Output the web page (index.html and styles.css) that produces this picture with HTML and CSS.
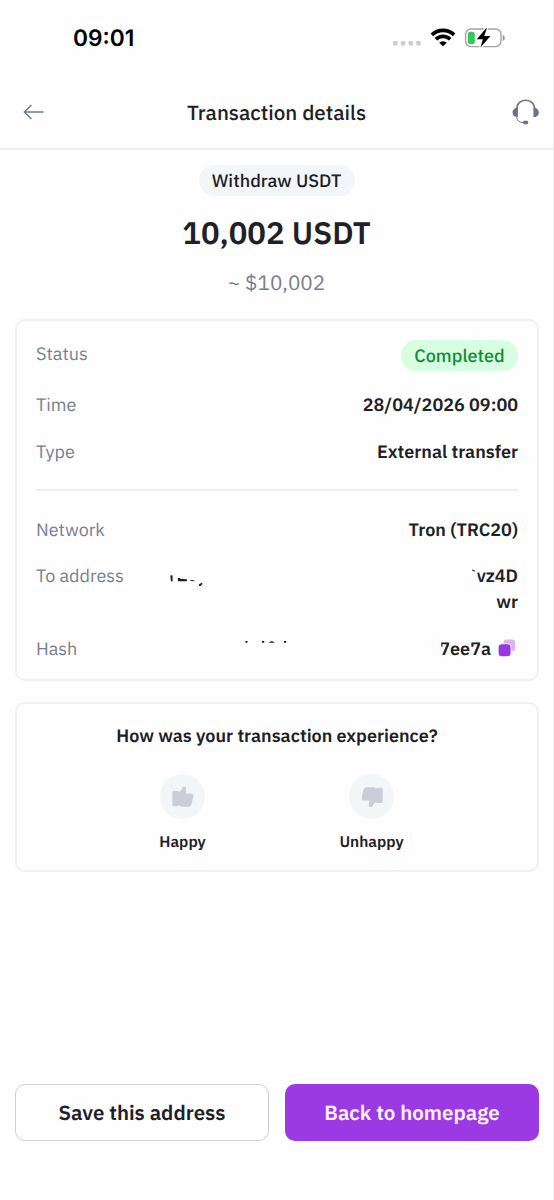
FILE: index.html
```html
<!DOCTYPE html>
<html lang="en">
<head>
<meta charset="utf-8">
<title>Transaction details</title>
<link rel="stylesheet" href="styles.css">
</head>
<body>
<div class="screen">
  <div class="statusbar">
    <span class="clock">09:01</span>
    <div class="indicators">
      <svg class="signal" width="28" height="5" viewBox="0 0 28 5" fill="#cdcdcd"><rect width="4.5" height="4.5" rx="1.3"/><rect x="7.8" width="4.5" height="4.5" rx="1.3"/><rect x="15.5" width="4.5" height="4.5" rx="1.3"/><rect x="23.2" width="4.5" height="4.5" rx="1.3"/></svg>
      <svg class="wifi" width="26" height="19" viewBox="0 0 26 19" fill="none" stroke="#000" stroke-width="3.7"><path d="M1.9 6.9a16 16 0 0 1 22.2 0"/><path d="M5.9 11.3a10 10 0 0 1 14.2 0"/><path d="M9.2 14.7a5.4 5.4 0 0 1 7.6 0L13 18.3z" fill="#000" stroke="none"/></svg>
      <svg class="battery" width="42" height="22" viewBox="0 0 42 22"><rect x="1.6" y="2" width="35.4" height="17.6" rx="5.5" fill="#fff" stroke="#a3a3a3" stroke-width="1.4"/><path d="M38.8 8v6c2.6-.8 2.6-5.2 0-6z" fill="#8f8f8f"/><rect x="3.8" y="4.8" width="7" height="12.2" rx="2.6" fill="#35c759"/><path d="M22 1.2 12.8 12.2h6.1l-2.5 8.4 10.1-11.500h-6.200L22.900 1.200z" fill="#000" stroke="#fff" stroke-width="2.400" paint-order="stroke" stroke-linejoin="round"/></svg>
    </div>
  </div>

  <header class="header">
    <svg class="back" width="22" height="16" viewBox="0 0 22 16" fill="none" stroke="#717989" stroke-width="1.5"><path d="M20.5 8H1.5M8.4 1 1.4 8l7 7"/></svg>
    <h1 class="title">Transaction details</h1>
    <svg class="support" width="28" height="26" viewBox="0 0 28 26"><path d="M4.8 10.500C4.700 4.500 8.400 1.200 13.700 1.200s9 3.300 8.900 9.300" fill="none" stroke="#697284" stroke-width="1.500"/><path d="M5.900 8.800v9.400C2.700 18.200.6 16.500.6 13.500s2.100-4.700 5.300-4.700zM21.400 8.800v9.400c3.300 0 5.400-1.700 5.400-4.700s-2.100-4.700-5.400-4.700z" fill="#697284"/><path d="M4.600 18.300c.7 3.500 3 5.100 6.500 5.300" fill="none" stroke="#697284" stroke-width="1"/><rect x="11" y="21.800" width="5.200" height="3.400" rx="1.400" fill="#697284"/></svg>
  </header>

  <main class="content">
    <section class="summary">
      <span class="kind">Withdraw USDT</span>
      <div class="amount">10,002 USDT</div>
      <div class="fiat">~ $10,002</div>
    </section>

    <section class="card details">
      <div class="row"><span class="label">Status</span><span class="badge">Completed</span></div>
      <div class="row"><span class="label">Time</span><span class="value">28/04/2026 09:00</span></div>
      <div class="row"><span class="label">Type</span><span class="value">External transfer</span></div>
      <hr class="rule">
      <div class="row"><span class="label">Network</span><span class="value">Tron (TRC20)</span></div>
      <div class="row">
        <span class="label">To address</span>
        <svg class="address-marks" width="36" height="12" viewBox="0 0 36 12" fill="#202126"><path d="M.3 .5 2.600.2v6H.9zM7.900 3h2.100v.7l6.900.5v2H7.900zM20 5.300l2.600-.2 2 .7v.5l-4-.3zM29 9.200l3.300-1.800v1.600l-1.500 1.900H29z"/></svg>
        <span class="value"><svg class="tail-mark" width="5" height="4" viewBox="0 0 5 4"><path d="M1 1 4 2.200" stroke="#202126" stroke-width="1"/></svg><span class="address-tail">vz4D</span><br>wr</span>
      </div>
      <div class="row">
        <span class="label">Hash</span>
        <svg class="hash-marks" width="44" height="4" viewBox="0 0 44 4" fill="#202126"><path d="M.5 1h2.200l-.5 1.700H.5zM17 1h2.200v1.700H17zM24 2.200l2-.9h1.400l2 .9v.6H24zM39 1h2.200v1.700H39z"/></svg>
        <span class="value hash-tail">7ee7a</span>
        <svg class="copy" width="18" height="18" viewBox="0 0 18 18"><rect x="5.500" y=".6" width="11.700" height="11.700" rx="3.300" fill="#dab4f2"/><rect x=".6" y="5.300" width="12" height="12" rx="3.300" fill="#9838e3" stroke="#fff" stroke-width="1.600" paint-order="stroke"/></svg>
      </div>
    </section>

    <section class="card feedback">
      <h2 class="question">How was your transaction experience?</h2>
      <div class="choices">
        <div class="choice">
          <span class="circle"><svg width="22" height="22" viewBox="0 0 22 22" fill="#ccced7"><path d="M1.800 5h3.400c.8 0 1.300.5 1.500 1.100C9.300 5.100 9.800 3 10.600 1.600 11.400.2 14 .7 14.200 2.800l-.5 4.600h5.500c1.500 0 2.500 1.300 2.200 2.700l-1.900 8.200c-.4 1.500-1.300 2.400-2.800 2.400H11c-1.900 0-3.100-.5-4.200-1.400-.3.6-.9.9-1.600.9H1.800C.9 20.200.3 19.600.3 18.700V6.500C.3 5.600.9 5 1.800 5z"/></svg></span>
          <span class="mood">Happy</span>
        </div>
        <div class="choice">
          <span class="circle"><svg width="22" height="22" viewBox="0 0 22 22" fill="#ccced7"><path transform="rotate(180 11 11)" d="M1.800 5h3.400c.8 0 1.300.5 1.500 1.100C9.300 5.100 9.800 3 10.600 1.600 11.400.2 14 .7 14.200 2.800l-.5 4.600h5.500c1.500 0 2.500 1.300 2.200 2.700l-1.900 8.200c-.4 1.500-1.300 2.400-2.800 2.400H11c-1.900 0-3.100-.5-4.200-1.400-.3.6-.9.9-1.600.9H1.800C.9 20.200.3 19.600.3 18.700V6.500C.3 5.600.9 5 1.800 5z"/></svg></span>
          <span class="mood">Unhappy</span>
        </div>
      </div>
    </section>
  </main>

  <footer class="actions">
    <button class="btn save">Save this address</button>
    <button class="btn home">Back to homepage</button>
  </footer>
</div>
</body>
</html>
```
FILE: styles.css
```css
* { box-sizing: border-box; margin: 0; }
body { background: #fefefe; font-family: "IBM Plex Sans", Roboto, "Noto Sans", sans-serif; color: #202126; text-rendering: geometricPrecision; }
svg { display: block; flex: none; }
.screen { width: 554px; height: 1200px; display: flex; flex-direction: column; border-right: 1px solid #ececee; overflow: hidden; }
.statusbar { height: 76px; padding: 0 47px 0 73px; display: flex; justify-content: space-between; align-items: center; }
.clock { font: 600 22.7px/30px Inter, sans-serif; color: #000; padding-top: 2px; }
.indicators { display: flex; align-items: center; margin-top: -1px; }
.signal { margin-top: 12px; }
.wifi { margin: 0 8px 0 9px; }
.header { height: 74px; border-bottom: 2px solid #eeeeef; display: grid; grid-template-columns: 40px 1fr 40px; align-items: center; padding: 0 13px 0 13px; }
.back { margin-left: 10px; }
.title { font-size: 20.6px; font-weight: 500; line-height: 28px; text-align: center; padding-top: 2px; }
.support { justify-self: end; }
.content { padding: 15px 15px 0 15px; }
.summary { display: flex; flex-direction: column; align-items: center; }
.kind { height: 31px; width: 156px; border-radius: 16px; background: #f3f6f8; text-align: center; font-size: 18px; font-weight: 500; line-height: 31px; white-space: nowrap; }
.amount { font-size: 31px; font-weight: 600; line-height: 40px; margin-top: 17px; white-space: nowrap; }
.fiat { font-size: 20.7px; line-height: 28px; color: #777e8f; margin-top: 16px; }
.card { border: 2px solid #f0f0f1; border-radius: 10px; width: 524px; }
.details { margin-top: 22px; height: 362px; padding: 20px 19px 0; }
.row { display: flex; justify-content: space-between; align-items: flex-start; margin-bottom: 20.5px; font-size: 18px; line-height: 26px; }
.label { color: #777e8f; }
.value { font-weight: 600; text-align: right; white-space: nowrap; }
.badge { width: 117px; height: 31px; line-height: 31px; border-radius: 16px; background: #d7fee0; color: #128a38; font-weight: 500; text-align: center; margin-top: -1px; margin-bottom: 0.5px; }
.rule { border: 0; height: 2px; background: #eeeeef; margin: 24px 0 26px; }
.address-marks { margin: 12px auto 0 46px; }
.tail-mark { display: inline-block; vertical-align: 9px; }
.address-tail { display: inline-block; clip-path: inset(0 0 0 1px); }
.hash-marks { margin: 4px auto 0 168px; }
.hash-tail { clip-path: inset(0 0 0 2px); }
.copy { margin: 3px 2px 0 7px; }
.feedback { margin-top: 21px; height: 170px; padding: 19px 0 0; }
.question { font-size: 18px; font-weight: 600; line-height: 26px; text-align: center; }
.choices { display: grid; grid-template-columns: 189px 189px; justify-content: center; margin-top: 25px; }
.choice { display: flex; flex-direction: column; align-items: center; }
.circle { width: 45px; height: 45px; border-radius: 50%; background: #f3f6f8; display: flex; align-items: center; justify-content: center; }
.mood { font-size: 15.5px; font-weight: 600; line-height: 20px; margin-top: 13px; }
.actions { margin-top: auto; margin-bottom: 59px; padding: 0 15px; display: grid; grid-template-columns: 254px 254px; gap: 16px; }
.btn { height: 57px; border-radius: 10px; font: 600 20.5px/28px "IBM Plex Sans", Roboto, sans-serif; padding: 1px 0 0; text-rendering: geometricPrecision; }
.save { border: 1.5px solid #cdced4; background: #fefefe; color: #202126; }
.home { border: 0; background: #9b3ae4; color: #fbf3ff; }
```
